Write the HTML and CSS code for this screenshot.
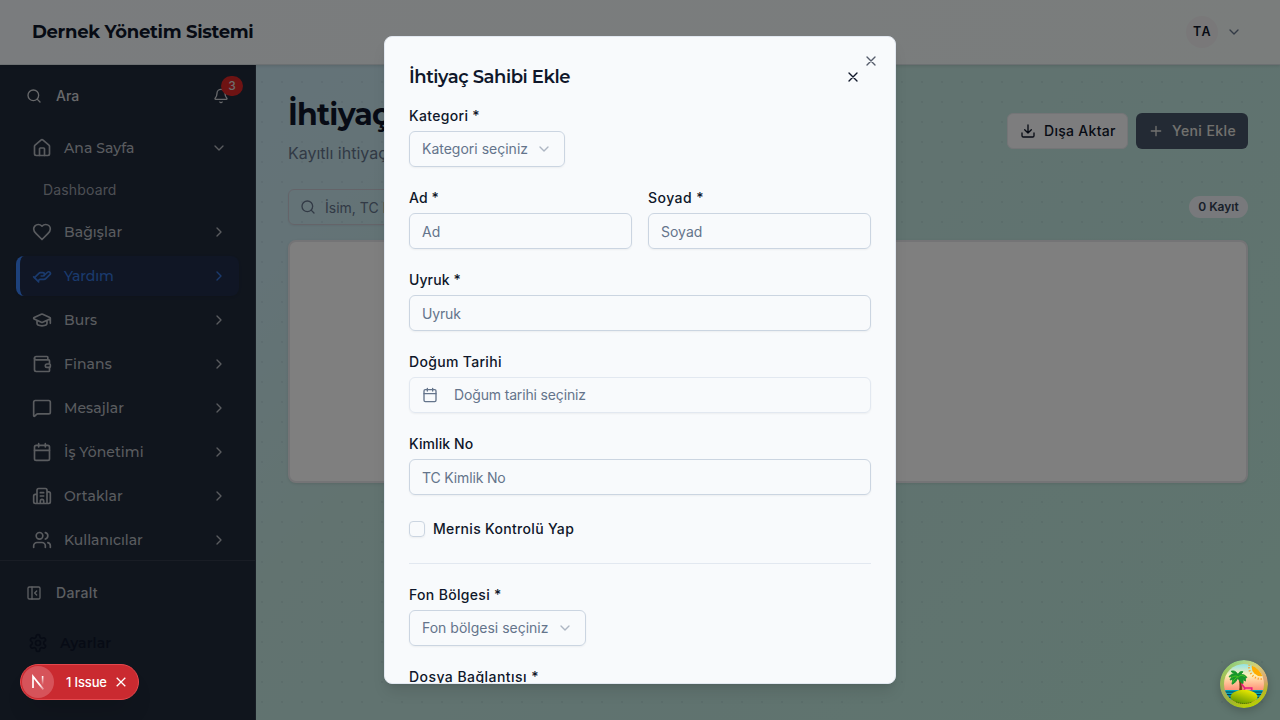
FILE: index.html
```html
<!DOCTYPE html>
<html lang="tr">
<head>
<meta charset="utf-8">
<title>Dernek Yönetim Sistemi</title>
<link rel="stylesheet" href="styles.css">
</head>
<body>
<svg class="defs" width="0" height="0">
  <symbol id="chev" viewBox="0 0 24 24"><path d="m9 18 6-6-6-6"/></symbol>
  <symbol id="down" viewBox="0 0 24 24"><path d="m6 9 6 6 6-6"/></symbol>
  <symbol id="x" viewBox="0 0 24 24"><path d="M18 6 6 18M6 6l12 12"/></symbol>
  <symbol id="search" viewBox="0 0 24 24"><circle cx="11" cy="11" r="8"/><path d="m21 21-4.3-4.3"/></symbol>
  <symbol id="calendar" viewBox="0 0 24 24"><path d="M8 2v4M16 2v4M3 10h18"/><rect width="18" height="18" x="3" y="4" rx="2"/></symbol>
</svg>
<div class="app">
  <header class="header">
    <div class="brand">Dernek Yönetim Sistemi</div>
    <div class="account"><span class="avatar">TA</span><svg class="i16 muted"><use href="#down"/></svg></div>
  </header>
  <div class="body">
    <aside class="sidebar">
      <div class="side-search">
        <svg class="i16"><use href="#search"/></svg><span class="side-text">Ara</span>
        <span class="bell"><svg class="i16" viewBox="0 0 24 24"><path d="M10.268 21a2 2 0 0 0 3.464 0M3.262 15.326A1 1 0 0 0 4 17h16a1 1 0 0 0 .74-1.673C19.41 13.956 18 12.499 18 8A6 6 0 0 0 6 8c0 4.499-1.411 5.956-2.738 7.326"/></svg><b class="badge">3</b></span>
      </div>
      <nav class="nav">
        <div class="item"><svg class="i20" viewBox="0 0 24 24"><path d="M15 21v-8a1 1 0 0 0-1-1h-4a1 1 0 0 0-1 1v8"/><path d="M3 10a2 2 0 0 1 .709-1.528l7-5.999a2 2 0 0 1 2.582 0l7 5.999A2 2 0 0 1 21 10v9a2 2 0 0 1-2 2H5a2 2 0 0 1-2-2z"/></svg><span>Ana Sayfa</span><svg class="i16"><use href="#down"/></svg></div>
        <div class="sub">Dashboard</div>
        <div class="item"><svg class="i20" viewBox="0 0 24 24"><path d="M19 14c1.49-1.46 3-3.21 3-5.5A5.5 5.5 0 0 0 16.5 3c-1.76 0-3 .5-4.5 2-1.5-1.5-2.74-2-4.5-2A5.5 5.5 0 0 0 2 8.5c0 2.3 1.5 4.05 3 5.5l7 7Z"/></svg><span>Bağışlar</span><svg class="i16"><use href="#chev"/></svg></div>
        <div class="item active"><svg class="i20" viewBox="0 0 24 24"><path d="M11 12h2a2 2 0 1 0 0-4h-3c-.6 0-1.1.2-1.4.6L3 14"/><path d="m7 18 1.6-1.4c.3-.4.8-.6 1.4-.6h4c1.1 0 2.1-.4 2.8-1.2l4.6-4.4a2 2 0 0 0-2.75-2.91l-4.2 3.9M2 13l6 6"/></svg><span>Yardım</span><svg class="i16"><use href="#chev"/></svg></div>
        <div class="item"><svg class="i20" viewBox="0 0 24 24"><path d="M21.42 10.922a1 1 0 0 0-.019-1.838L12.83 5.18a2 2 0 0 0-1.66 0L2.6 9.08a1 1 0 0 0 0 1.832l8.57 3.908a2 2 0 0 0 1.66 0zM22 10v6M6 12.5V16a6 3 0 0 0 12 0v-3.5"/></svg><span>Burs</span><svg class="i16"><use href="#chev"/></svg></div>
        <div class="item"><svg class="i20" viewBox="0 0 24 24"><path d="M19 7V4a1 1 0 0 0-1-1H5a2 2 0 0 0 0 4h15a1 1 0 0 1 1 1v4h-3a2 2 0 0 0 0 4h3a1 1 0 0 0 1-1v-2a1 1 0 0 0-1-1"/><path d="M3 5v14a2 2 0 0 0 2 2h15a1 1 0 0 0 1-1v-4"/></svg><span>Finans</span><svg class="i16"><use href="#chev"/></svg></div>
        <div class="item"><svg class="i20" viewBox="0 0 24 24"><path d="M22 17a2 2 0 0 1-2 2H6.828a2 2 0 0 0-1.414.586l-2.202 2.202A.71.71 0 0 1 2 21.286V5a2 2 0 0 1 2-2h16a2 2 0 0 1 2 2z"/></svg><span>Mesajlar</span><svg class="i16"><use href="#chev"/></svg></div>
        <div class="item"><svg class="i20"><use href="#calendar"/></svg><span>İş Yönetimi</span><svg class="i16"><use href="#chev"/></svg></div>
        <div class="item"><svg class="i20" viewBox="0 0 24 24"><path d="M10 12h4M10 8h4M14 21v-3a2 2 0 0 0-4 0v3M6 10H4a2 2 0 0 0-2 2v7a2 2 0 0 0 2 2h16a2 2 0 0 0 2-2V9a2 2 0 0 0-2-2h-2M6 21V5a2 2 0 0 1 2-2h8a2 2 0 0 1 2 2v16"/></svg><span>Ortaklar</span><svg class="i16"><use href="#chev"/></svg></div>
        <div class="item tight"><svg class="i20" viewBox="0 0 24 24"><path d="M16 21v-2a4 4 0 0 0-4-4H6a4 4 0 0 0-4 4v2M16 3.128a4 4 0 0 1 0 7.744M22 21v-2a4 4 0 0 0-3-3.87"/><circle cx="9" cy="7" r="4"/></svg><span>Kullanıcılar</span><svg class="i16"><use href="#chev"/></svg></div>
      </nav>
      <div class="side-foot">
        <div class="collapse"><svg class="i16" viewBox="0 0 24 24"><rect width="18" height="18" x="3" y="3" rx="2"/><path d="M9 3v18M16 15l-3-3 3-3"/></svg><span class="side-text">Daralt</span></div>
        <div class="settings"><svg class="i20" viewBox="0 0 24 24"><path d="M12.22 2h-.44a2 2 0 0 0-2 2v.18a2 2 0 0 1-1 1.73l-.43.25a2 2 0 0 1-2 0l-.15-.08a2 2 0 0 0-2.73.73l-.22.38a2 2 0 0 0 .73 2.73l.15.1a2 2 0 0 1 1 1.72v.51a2 2 0 0 1-1 1.74l-.15.09a2 2 0 0 0-.73 2.73l.22.38a2 2 0 0 0 2.73.73l.15-.08a2 2 0 0 1 2 0l.43.25a2 2 0 0 1 1 1.73V20a2 2 0 0 0 2 2h.44a2 2 0 0 0 2-2v-.18a2 2 0 0 1 1-1.73l.43-.25a2 2 0 0 1 2 0l.15.08a2 2 0 0 0 2.73-.73l.22-.39a2 2 0 0 0-.73-2.73l-.15-.08a2 2 0 0 1-1-1.74v-.5a2 2 0 0 1 1-1.74l.15-.09a2 2 0 0 0 .73-2.73l-.22-.38a2 2 0 0 0-2.73-.73l-.15.08a2 2 0 0 1-2 0l-.43-.25a2 2 0 0 1-1-1.73V4a2 2 0 0 0-2-2z"/><circle cx="12" cy="12" r="3"/></svg><span>Ayarlar</span></div>
      </div>
    </aside>
    <main class="main">
      <div class="page-head">
        <div><h1 class="page-title">İhtiyaç</h1><p class="page-sub">Kayıtlı ihtiyaç</p></div>
        <div class="actions">
          <div class="btn light"><svg class="i16" viewBox="0 0 24 24"><path d="M12 15V3M21 15v4a2 2 0 0 1-2 2H5a2 2 0 0 1-2-2v-4M7 10l5 5 5-5"/></svg><span class="lift">Dışa Aktar</span></div>
          <div class="btn dark"><svg class="i16" viewBox="0 0 24 24"><path d="M5 12h14M12 5v14"/></svg><span class="lift">Yeni Ekle</span></div>
        </div>
      </div>
      <div class="filters">
        <div class="filter"><svg class="i16"><use href="#search"/></svg>İsim, TC K</div>
        <span class="count">0 Kayıt</span>
      </div>
      <div class="panel"></div>
    </main>
  </div>
</div>
<div class="overlay">
  <section class="dialog">
    <svg class="i16 close"><use href="#x"/></svg>
    <div class="dialog-head"><h2 class="dialog-title">İhtiyaç Sahibi Ekle</h2><span class="head-x"><svg class="i16"><use href="#x"/></svg></span></div>
    <div class="form">
      <div class="field"><label class="label">Kategori *</label><div class="control select w156"><span class="lift">Kategori seçiniz</span><svg class="i16"><use href="#down"/></svg></div></div>
      <div class="pair">
        <div class="field"><label class="label short">Ad *</label><div class="control">Ad</div></div>
        <div class="field"><label class="label wide">Soyad *</label><div class="control">Soyad</div></div>
      </div>
      <div class="field"><label class="label short">Uyruk *</label><div class="control tc">Uyruk</div></div>
      <div class="field"><label class="label">Doğum Tarihi</label><div class="control date"><svg class="i16"><use href="#calendar"/></svg><span class="lift">Doğum tarihi seçiniz</span></div></div>
      <div class="field"><label class="label short">Kimlik No</label><div class="control tc">TC Kimlik No</div></div>
      <div class="check"><span class="box"></span><label class="label">Mernis Kontrolü Yap</label></div>
      <div class="rule"></div>
      <div class="field"><label class="label">Fon Bölgesi *</label><div class="control select w177"><span class="lift">Fon bölgesi seçiniz</span><svg class="i16"><use href="#down"/></svg></div></div>
      <div class="field"><label class="label wide">Dosya Bağlantısı *</label></div>
    </div>
  </section>
</div>
<div class="issue">
  <span class="n-mark"><svg width="20" height="20" viewBox="0 0 20 20"><defs><linearGradient id="g1" x1="0" y1="0" x2="0" y2="1"><stop offset="0" stop-color="#fff"/><stop offset="1" stop-color="#fff" stop-opacity="0"/></linearGradient><linearGradient id="g2" x1="0" y1="0" x2="1" y2="1"><stop offset=".6" stop-color="#fff"/><stop offset="1" stop-color="#fff" stop-opacity=".3"/></linearGradient></defs><path d="M5 16V4.5L15.4 17.4" stroke="url(#g2)" stroke-width="1.7" fill="none"/><rect x="13.8" y="4" width="1.6" height="9" fill="url(#g1)"/></svg></span>
  <span class="issue-text">1 Issue</span>
  <svg class="issue-x" viewBox="0 0 14 14"><path d="M2.7 2.7l8.6 8.6M11.3 2.7l-8.6 8.6"/></svg>
</div>
<svg class="island" viewBox="0 0 48 48">
  <defs>
    <linearGradient id="sky" x1="0" y1="0" x2="0" y2="1"><stop offset="0" stop-color="#6bdff5"/><stop offset=".32" stop-color="#fff0b5"/><stop offset=".68" stop-color="#ff806d"/></linearGradient>
    <linearGradient id="sand" x1=".8" y1="0" x2=".2" y2="1"><stop offset="0" stop-color="#f7f000"/><stop offset="1" stop-color="#559000"/></linearGradient>
    <linearGradient id="ring" x1=".3" y1="0" x2=".6" y2="1"><stop offset="0" stop-color="#8fd998"/><stop offset=".25" stop-color="#d9cd70"/><stop offset=".55" stop-color="#d9a378"/><stop offset=".75" stop-color="#b8b629"/><stop offset="1" stop-color="#b7d100"/></linearGradient>
    <linearGradient id="ringl" x1="0" x2="1"><stop offset="0" stop-color="#70b83d"/><stop offset=".5" stop-color="#70b83d" stop-opacity="0"/></linearGradient>
    <clipPath id="disc"><circle cx="24" cy="24" r="20"/></clipPath>
  </defs>
  <circle cx="24" cy="24" r="24" fill="url(#ring)"/><circle cx="24" cy="24" r="24" fill="url(#ringl)" opacity=".6"/>
  <g clip-path="url(#disc)">
    <path fill="url(#sky)" d="M0 0h48v48H0z"/>
    <circle cx="41" cy="7" r="9.3" fill="#ffad00"/><circle cx="41" cy="7" r="12" fill="none" stroke="#ff9f22" stroke-width="2" stroke-dasharray="1.1 1.9"/>
    <path fill="#00a7bd" d="M0 30h48v10H0z"/><path d="M4 32h40M5 34.7h39M7 37.3h34" stroke="#073e4b" stroke-width="1.2"/>
    <path d="M18 17c2 4 2.4 9 1.4 14h2.4c.2-6-.5-10-2.4-14z" fill="#743a12" stroke="#743a12" stroke-width=".7"/>
    <path d="M18.500 16c-4-4-8-2-9.500 1l3-.4-2 3.400 2.800-.8-.8 5c3.600-1 5-4.500 6-7 .8 3 2.600 5.400 5 6.400l.2-4 2.300 1.500-.2-3.200 1.600-.3c-1.400-2.600-4-3.600-6.500-2.800l2.600-3c-2.700-1-4.500 1-5 3-1.400-3.400-4.600-4.600-7-3.400l2 1.300z" fill="#17962c" stroke="#17962c" stroke-width=".9"/>
    <path d="M11.500 17.500c3-2 5-1.800 7-.6 2-2.200 4.400-1.600 6.600-.2M12.800 22c1-2.500 3-4 5-5.200" stroke="#4dc91f" fill="none"/>
    <path d="m21.500 24 3.200 4h7v2.4M24 30l1-2" stroke="#e91b7f" stroke-width="1.7" fill="none"/>
    <ellipse cx="24" cy="37" rx="13.500" ry="7.200" fill="url(#sand)"/>
  </g>
  <path d="M16 42q8 3 16 0" stroke="#426b00" fill="none" stroke-dasharray="1 1" stroke-width=".9"/>
</svg>
</body>
</html>
```
FILE: styles.css
```css
*{box-sizing:border-box}
body{margin:0;width:1280px;height:720px;overflow:hidden;font-family:Inter,"Noto Sans",sans-serif;font-size:14px;color:#0f172a}
h1,h2,p{margin:0}
svg{flex:none;fill:none}
.defs{position:absolute}
.i16,.i20{stroke:currentColor;stroke-width:2;stroke-linecap:round;stroke-linejoin:round}
.i16{width:16px;height:16px}
.i20{width:20px;height:20px}
.lift{padding-bottom:2px}
.app{height:720px;display:flex;flex-direction:column;background:radial-gradient(circle at 2px 2px,rgba(100,116,139,.1) 1px,transparent 1px) 0 0/20px 20px,linear-gradient(135deg,#cae6f6 0%,#c8e6ee 27%,#c4e6e0 43%,#c1e6e0 64%,#beebdc 100%)}
.header{height:65px;flex:none;display:flex;align-items:center;justify-content:space-between;padding:0 38px 0 32px;background:linear-gradient(90deg,#f5f9fc,#f5faf9);border-bottom:1px solid #d8e0e5;box-shadow:0 1px 3px rgba(0,0,0,.12);position:relative}
.brand{font:700 18px/28px Montserrat,Inter,sans-serif;letter-spacing:-.31px}
.account{display:flex;align-items:center;gap:8px}
.avatar{width:32px;height:32px;border-radius:50%;background:#f2f1f2;display:flex;align-items:center;justify-content:center;font-size:12.5px;font-weight:600;letter-spacing:1.4px;padding:0 0 2px 1px}
.muted{color:#64748b}
.body{flex:1;display:flex;min-height:0}
.sidebar{width:256px;flex:none;background:#202a3b;color:#b4b8bf;display:flex;flex-direction:column;border-right:1px solid #303a4b}
.side-search{height:63px;flex:none;display:flex;align-items:center;padding:0 26px 2px;gap:14px;color:#d0d2d6}
.side-text{font-weight:500;letter-spacing:0}
.bell{margin-left:auto;position:relative;display:flex}
.badge{position:absolute;left:8px;top:-12px;width:22px;height:20px;border-radius:10px;background:#dc2626;color:#ded9d9;font-size:12px;font-weight:500;line-height:20px;text-align:center}
.nav{height:432px;flex:none;padding:0 16px;display:flex;flex-direction:column;gap:4px;overflow:hidden}
.item{height:40px;flex:none;display:flex;align-items:center;padding:0 12px 0 16px;gap:12px;border-radius:8px;font:500 14px/20px Montserrat,Inter,sans-serif;letter-spacing:.08px}
.item span{flex:1}
.tight{letter-spacing:0}
.active{color:#3575dc;background:#202d4a;border-left:4px solid #3b82f6;padding-left:12px;letter-spacing:-.1px;box-shadow:0 1px 3px rgba(0,0,0,.1)}
.sub{height:36px;flex:none;padding-left:27px;line-height:36px;letter-spacing:.15px;color:#9a9ea7}
.side-foot{flex:1;border-top:1px solid #323b4b}
.collapse{height:64px;display:flex;align-items:center;padding:0 26px;gap:14px;color:#b9bdc3}
.collapse .side-text{padding-bottom:2px;letter-spacing:.35px}
.settings{display:flex;align-items:center;height:36px;padding:0 28px;gap:12px;color:#0f172a;font:600 14px Montserrat,Inter,sans-serif;letter-spacing:.1px}
.main{flex:1;padding:29px 32px 28px}
.page-head{display:flex;justify-content:space-between;height:75px}
.page-title{font:700 30px/42px Montserrat,Inter,sans-serif;letter-spacing:-.75px;white-space:nowrap}
.page-sub{font-size:16px;line-height:24px;margin-top:5px;color:#64748b}
.actions{display:flex;gap:8px;padding-top:19px}
.btn{height:36px;border-radius:6px;display:flex;align-items:center;gap:8px;padding:0 12px;font-weight:500;letter-spacing:.3px;white-space:nowrap}
.light{width:121px;background:#fbfbfc;border:1px solid #e8eaef}
.dark{width:112px;background:#475569;color:#e4e3df;letter-spacing:.4px}
.filters{display:flex;justify-content:space-between;align-items:center;height:36px;margin-top:20px}
.filter{width:384px;height:36px;border:1px solid #c8c9d3;border-radius:6px;display:flex;align-items:center;padding-left:11px;gap:9px;color:#64748b;box-shadow:0 1px 2px rgba(0,0,0,.05)}
.count{width:59px;height:22px;border-radius:11px;background:#f1f3f8;font-size:12px;font-weight:600;line-height:22px;text-align:center;color:#334155}
.panel{height:243px;margin-top:15px;border:2px solid #e9e9ec;border-radius:8px;background:#fff;box-shadow:0 1px 3px rgba(0,0,0,.1)}
.overlay{position:absolute;inset:0;background:rgba(0,0,0,.5);display:flex;align-items:center;justify-content:center}
.dialog{position:relative;width:512px;height:648px;overflow:hidden;border:1px solid #e2e8f0;border-radius:8px;background:#f8fafc;padding:24px;box-shadow:0 10px 15px -3px rgba(0,0,0,.1),0 4px 6px -4px rgba(0,0,0,.1)}
.close{position:absolute;right:16px;top:16px;color:#555c6b}
.dialog-head{height:32px;display:flex;justify-content:space-between;align-items:center;margin-bottom:16px}
.dialog-title{font:600 18px/28px Montserrat,Inter,sans-serif;letter-spacing:-.45px}
.head-x{width:36px;display:flex;justify-content:center}
.form{display:flex;flex-direction:column;gap:24px}
.field{display:flex;flex-direction:column;gap:8px;flex:1}
.label{font-weight:500;line-height:14px;letter-spacing:.32px;white-space:nowrap}
.label.short{letter-spacing:.1px}
.label.wide{letter-spacing:.45px}
.control{height:36px;border:1px solid #cbd5e1;border-radius:6px;padding:0 12px;display:flex;align-items:center;color:#64748b;letter-spacing:0;white-space:nowrap;box-shadow:0 1px 2px rgba(0,0,0,.05)}
.select{justify-content:space-between}
.select svg{opacity:.5}
.w156{width:156px}
.w177{width:177px}
.date{border-color:#e2e8f0;gap:16px;letter-spacing:-.15px}
.tc{letter-spacing:-.15px}
.pair{display:flex;gap:16px}
.check{display:flex;align-items:center;gap:8px;height:16px;margin:2px 0}
.box{width:16px;height:16px;border:1px solid #cbd5e1;border-radius:4px;box-shadow:0 1px 2px rgba(0,0,0,.05)}
.rule{height:1px;background:#e2e8f0}
.issue{position:absolute;left:20px;top:664px;width:119px;height:36px;border-radius:18px;background:#ca2a30;border:1px solid #e5484d;display:flex;align-items:center;padding-left:1px;box-shadow:0 16px 24px -8px rgba(0,0,0,.15)}
.n-mark{width:32px;height:32px;border-radius:50%;background:#d6535a;display:flex;align-items:center;justify-content:center}
.issue-text{margin-left:12px;width:43px;color:#fff;font-size:13px;font-weight:500;white-space:nowrap;letter-spacing:-.15px}
.issue-x{width:14px;height:14px;margin-left:5px;stroke:#fff;stroke-width:1.3}
.island{position:absolute;left:1220px;top:660px;width:48px;height:48px;border-radius:50%;box-shadow:0 3px 8px rgba(0,0,0,.2)}
```
